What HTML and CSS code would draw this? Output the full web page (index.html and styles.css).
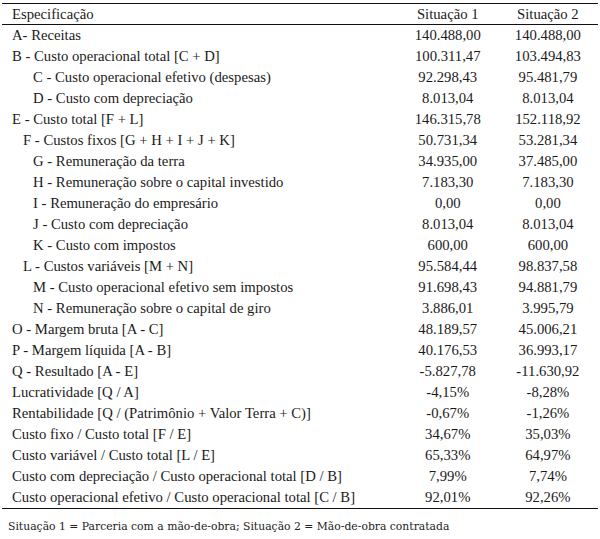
FILE: index.html
```html
<!DOCTYPE html>
<html lang="pt">
<head>
<meta charset="utf-8">
<link rel="stylesheet" href="styles.css">
</head>
<body>
<table class="tab">
  <thead>
    <tr><th class="spec">Especificação</th><th class="val">Situação 1</th><th class="val">Situação 2</th></tr>
  </thead>
  <tbody>
    <tr><td class="l0">A- Receitas</td><td>140.488,00</td><td>140.488,00</td></tr>
    <tr><td class="l0">B - Custo operacional total [C + D]</td><td>100.311,47</td><td>103.494,83</td></tr>
    <tr><td class="l2">C - Custo operacional efetivo (despesas)</td><td>92.298,43</td><td>95.481,79</td></tr>
    <tr><td class="l2">D - Custo com depreciação</td><td>8.013,04</td><td>8.013,04</td></tr>
    <tr><td class="l0">E - Custo total [F + L]</td><td>146.315,78</td><td>152.118,92</td></tr>
    <tr><td class="l1">F - Custos fixos [G + H + I + J + K]</td><td>50.731,34</td><td>53.281,34</td></tr>
    <tr><td class="l2">G - Remuneração da terra</td><td>34.935,00</td><td>37.485,00</td></tr>
    <tr><td class="l2">H - Remuneração sobre o capital investido</td><td>7.183,30</td><td>7.183,30</td></tr>
    <tr><td class="l2">I - Remuneração do empresário</td><td>0,00</td><td>0,00</td></tr>
    <tr><td class="l2">J - Custo com depreciação</td><td>8.013,04</td><td>8.013,04</td></tr>
    <tr><td class="l2">K - Custo com impostos</td><td>600,00</td><td>600,00</td></tr>
    <tr><td class="l1">L - Custos variáveis [M + N]</td><td>95.584,44</td><td>98.837,58</td></tr>
    <tr><td class="l2">M - Custo operacional efetivo sem impostos</td><td>91.698,43</td><td>94.881,79</td></tr>
    <tr><td class="l2">N - Remuneração sobre o capital de giro</td><td>3.886,01</td><td>3.995,79</td></tr>
    <tr><td class="l0">O - Margem bruta [A - C]</td><td>48.189,57</td><td>45.006,21</td></tr>
    <tr><td class="l0">P - Margem líquida [A - B]</td><td>40.176,53</td><td>36.993,17</td></tr>
    <tr><td class="l0">Q - Resultado [A - E]</td><td>-5.827,78</td><td>-11.630,92</td></tr>
    <tr><td class="l0">Lucratividade [Q / A]</td><td>-4,15%</td><td>-8,28%</td></tr>
    <tr><td class="l0">Rentabilidade [Q / (Patrimônio + Valor Terra + C)]</td><td>-0,67%</td><td>-1,26%</td></tr>
    <tr><td class="l0">Custo fixo / Custo total [F / E]</td><td>34,67%</td><td>35,03%</td></tr>
    <tr><td class="l0">Custo variável / Custo total [L / E]</td><td>65,33%</td><td>64,97%</td></tr>
    <tr><td class="l0">Custo com depreciação / Custo operacional total [D / B]</td><td>7,99%</td><td>7,74%</td></tr>
    <tr class="last"><td class="l0">Custo operacional efetivo / Custo operacional total [C / B]</td><td>92,01%</td><td>92,26%</td></tr>
  </tbody>
</table>
<p class="note">Situação 1 = Parceria com a mão-de-obra; Situação 2 = Mão-de-obra contratada</p>
</body>
</html>
```
FILE: styles.css
```css
html, body {
  margin: 0;
  padding: 0;
  background: #fff;
}
body {
  padding: 3px 2px 0 2px;
  font-family: "Liberation Serif", "DejaVu Serif", serif;
  color: #1a1a1a;
}
.tab {
  width: 596px;
  border-collapse: collapse;
  font-size: 14.7px;
  border-top: 1.5px solid #111;
  border-bottom: 1.5px solid #111;
}
.tab th {
  font-weight: normal;
  height: 20px;
  padding: 0;
  border-bottom: 1.5px solid #111;
  text-align: center;
}
.tab th.spec {
  text-align: left;
  padding-left: 10px;
  width: 385px;
}
.tab th.val {
  width: 100px;
}
.tab td {
  height: 21px;
  padding: 0;
  text-align: center;
  white-space: nowrap;
}
.tab td.l0 { text-align: left; padding-left: 10px; }
.tab td.l1 { text-align: left; padding-left: 21px; }
.tab td.l2 { text-align: left; padding-left: 31px; }
.note {
  margin: 11px 0 0 6px;
  font-family: "DejaVu Serif", serif;
  font-size: 10.8px;
  color: #222;
}
```
